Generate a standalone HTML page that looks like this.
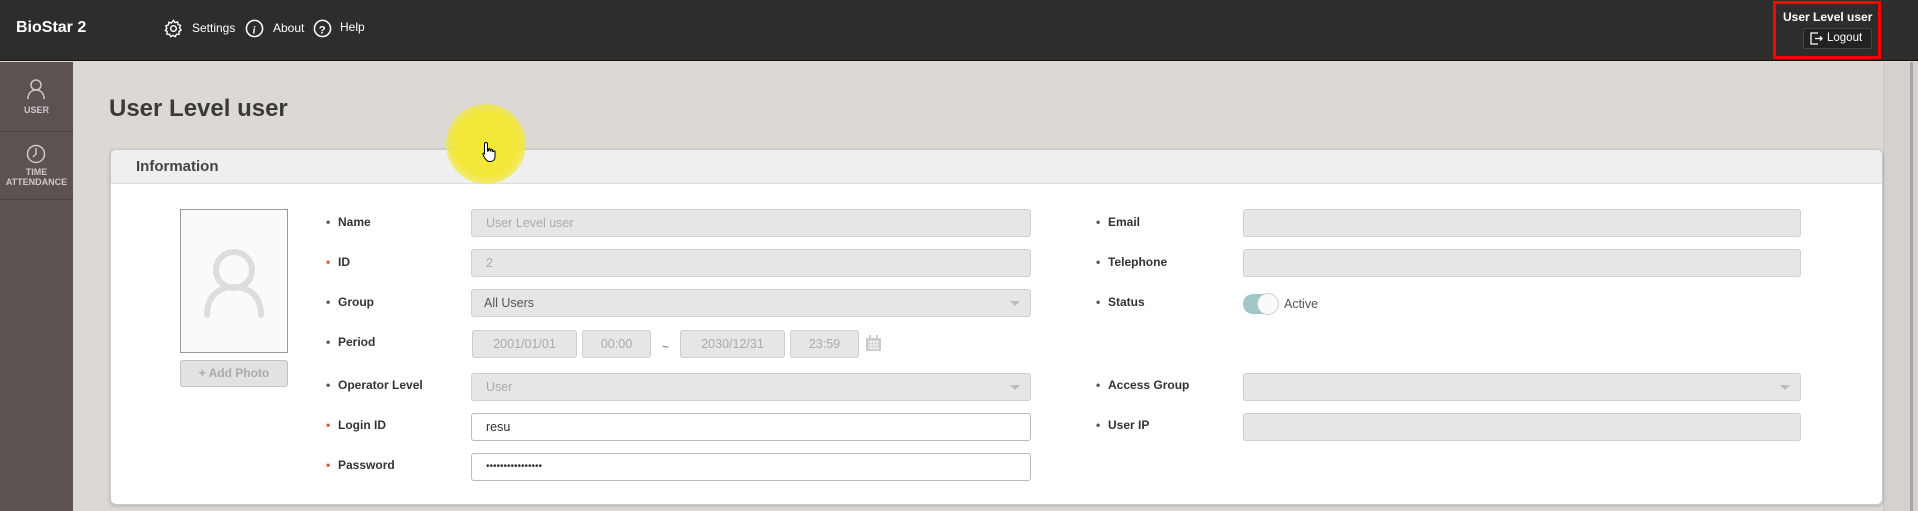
<!DOCTYPE html>
<html><head><meta charset="utf-8"><style>
*{box-sizing:border-box;margin:0;padding:0}
body{width:1918px;height:511px;overflow:hidden;background:#dcd9d4;font-family:"Liberation Sans",sans-serif;position:relative}
.abs{position:absolute}
#hdr{left:0;top:0;width:1918px;height:61px;background:#2f2c2c;border-bottom:1px solid #111}
.ht{color:#fff;font-size:12px;position:absolute}
#side{left:0;top:62px;width:73px;height:449px;background:#5c5252}
.sl{color:#cfc8c8;font-size:9px;font-weight:bold;text-align:center;width:73px;position:absolute;left:0;line-height:10px}
.lbl{position:absolute;font-size:12px;font-weight:bold;color:#333}
.lbl:before{content:"•";position:absolute;left:-12px;color:#555}
.lbl.r:before{color:#d2622f}
.inp{position:absolute;height:28px;background:#e6e6e6;border:1px solid #cfcfcf;border-radius:3px;font-size:12.5px;color:#aaa;padding-left:14px;line-height:26px}
.inp.w{background:#fff;border-color:#bbb;color:#333}
.arr:after{content:"";position:absolute;right:10px;top:11px;border:5px solid transparent;border-top:5px solid #bbb}
</style></head><body>
<div id="hdr" class="abs">
<div class="ht" style="left:16px;top:19px;font-size:16px;font-weight:bold">BioStar 2</div>
<svg class="abs" style="left:164px;top:19px" width="19" height="19" viewBox="0 0 20 20" fill="none" stroke="#fff" stroke-width="1.5"><circle cx="10" cy="10" r="3"/><path d="M10 1.5l1.6 2.3 2.7-.7.5 2.7 2.6 1-1 2.6 1.6 2.2-2.3 1.6.2 2.8-2.8.1-1.2 2.5-2.4-1.4-2.4 1.4-1.2-2.5-2.8-.1.2-2.8L1.4 12l1.6-2.2-1-2.6 2.6-1 .5-2.7 2.7.7z"/></svg>
<div class="ht" style="left:192px;top:21px">Settings</div>
<svg class="abs" style="left:245px;top:19px" width="19" height="19" viewBox="0 0 20 20" fill="none" stroke="#fff" stroke-width="1.6"><circle cx="10" cy="10" r="8.5"/><text x="8" y="15" fill="#fff" stroke="none" font-size="11" font-style="italic" font-weight="bold" font-family="Liberation Serif">i</text></svg>
<div class="ht" style="left:273px;top:21px">About</div>
<svg class="abs" style="left:313px;top:19px" width="19" height="19" viewBox="0 0 20 20" fill="none" stroke="#fff" stroke-width="1.6"><circle cx="10" cy="10" r="8.5"/><text x="6" y="15" fill="#fff" stroke="none" font-size="12" font-weight="bold">?</text></svg>
<div class="ht" style="left:340px;top:20px">Help</div>
<div class="abs" style="left:1773px;top:1px;width:108px;height:58px;border:3px solid #f00"></div>
<div class="ht" style="left:1783px;top:10px;font-weight:bold;font-size:12px">User Level user</div>
<div class="abs" style="left:1803px;top:28px;width:69px;height:21px;background:#222;border:1px solid #444;border-radius:2px"></div>
<svg class="abs" style="left:1810px;top:32px" width="13" height="13" viewBox="0 0 13 13" fill="none" stroke="#fff" stroke-width="1.3"><path d="M8 1H1v11h7M5 6.5h7M10 4.5l2 2-2 2"/></svg>
<div class="ht" style="left:1827px;top:32px;font-size:11.5px">Logout</div>
</div>
<div id="side" class="abs">
<svg class="abs" style="left:25px;top:16px" width="22" height="22" viewBox="0 0 22 22" fill="none" stroke="#cfc8c8" stroke-width="1.5"><circle cx="11" cy="7" r="5"/><path d="M3 21c0-6 3.5-9 8-9s8 3 8 9"/></svg>
<div class="sl" style="top:43px">USER</div>
<div class="abs" style="left:0;top:69px;width:73px;height:1px;background:#4a4242"></div>
<svg class="abs" style="left:26px;top:82px" width="20" height="20" viewBox="0 0 20 20" fill="none" stroke="#cfc8c8" stroke-width="1.5"><circle cx="10" cy="10" r="8.5"/><path d="M10 4v6l-3 3"/></svg>
<div class="sl" style="top:105px">TIME<br>ATTENDANCE</div>
<div class="abs" style="left:0;top:137px;width:73px;height:1px;background:#4a4242"></div>
</div>
<div class="abs" style="left:1883px;top:62px;width:35px;height:449px;background:#d5d2cd;border-left:1px solid #c9c5c0"></div>
<div class="abs" style="left:1910px;top:62px;width:3px;height:449px;background:#a8a5a0"></div>
<div class="abs" style="left:109px;top:95px;font-size:24px;font-weight:bold;color:#3a3a3a">User Level user</div>
<div class="abs" style="left:110px;top:149px;width:1773px;height:356px;background:#fff;border:1px solid #c8c8c8;border-radius:6px;box-shadow:0 1px 3px rgba(0,0,0,.2)"></div>
<div class="abs" style="left:111px;top:150px;width:1771px;height:34px;background:#efefef;border-bottom:1px solid #ddd;border-radius:6px 6px 0 0"></div>
<div class="abs" style="left:136px;top:158px;font-size:15px;font-weight:bold;color:#444">Information</div>
<div class="abs" style="left:180px;top:209px;width:108px;height:144px;border:1px solid #999;background:#fafafa"></div>
<svg class="abs" style="left:203px;top:248px" width="62" height="72" viewBox="0 0 62 72" fill="none" stroke="#ddd" stroke-width="6" stroke-linecap="round"><circle cx="31" cy="22" r="18"/><path d="M4 67c0-18 11-28 27-28s27 10 27 28"/></svg>
<div class="abs" style="left:180px;top:360px;width:108px;height:27px;background:#e2e2e2;border:1px solid #c2c2c2;border-radius:3px;font-size:12px;font-weight:bold;color:#aaa;text-align:center;line-height:25px">+ Add Photo</div>

<div class="lbl" style="left:338px;top:215px">Name</div>
<div class="lbl r" style="left:338px;top:255px">ID</div>
<div class="lbl" style="left:338px;top:295px">Group</div>
<div class="lbl" style="left:338px;top:335px">Period</div>
<div class="lbl" style="left:338px;top:378px">Operator Level</div>
<div class="lbl r" style="left:338px;top:418px">Login ID</div>
<div class="lbl r" style="left:338px;top:458px">Password</div>

<div class="inp" style="left:471px;top:209px;width:560px">User Level user</div>
<div class="inp" style="left:471px;top:249px;width:560px">2</div>
<div class="inp arr" style="left:471px;top:289px;width:560px;color:#555;padding-left:12px">All Users</div>
<div class="inp" style="left:472px;top:330px;width:105px;text-align:center;padding:0">2001/01/01</div>
<div class="inp" style="left:582px;top:330px;width:69px;text-align:center;padding:0">00:00</div>
<div class="abs" style="left:662px;top:340px;font-size:12px;color:#666">~</div>
<div class="inp" style="left:680px;top:330px;width:105px;text-align:center;padding:0">2030/12/31</div>
<div class="inp" style="left:790px;top:330px;width:69px;text-align:center;padding:0">23:59</div>
<svg class="abs" style="left:865px;top:335px" width="17" height="17" viewBox="0 0 17 17" fill="#ccc"><rect x="1" y="3" width="15" height="13"/><rect x="4" y="0" width="2" height="4"/><rect x="11" y="0" width="2" height="4"/><path d="M3 7h11M3 10h11M3 13h11M6 5v10M9 5v10M12 5v10" stroke="#fff" stroke-width=".8"/></svg>
<div class="inp arr" style="left:471px;top:373px;width:560px">User</div>
<div class="inp w" style="left:471px;top:413px;width:560px">resu</div>
<div class="inp w" style="left:471px;top:453px;width:560px;font-size:10px;letter-spacing:0">••••••••••••••••</div>

<div class="lbl" style="left:1108px;top:215px">Email</div>
<div class="lbl" style="left:1108px;top:255px">Telephone</div>
<div class="lbl" style="left:1108px;top:295px">Status</div>
<div class="lbl" style="left:1108px;top:378px">Access Group</div>
<div class="lbl" style="left:1108px;top:418px">User IP</div>
<div class="inp" style="left:1243px;top:209px;width:558px"></div>
<div class="inp" style="left:1243px;top:249px;width:558px"></div>
<div class="abs" style="left:1243px;top:294px;width:35px;height:20px;border-radius:10px;background:#9fc7c7"></div>
<div class="abs" style="left:1257px;top:293px;width:22px;height:22px;border-radius:50%;background:#fafafa;border:1px solid #ccc"></div>
<div class="abs" style="left:1284px;top:297px;font-size:12.5px;color:#555">Active</div>
<div class="inp arr" style="left:1243px;top:373px;width:558px"></div>
<div class="inp" style="left:1243px;top:413px;width:558px"></div>

<div class="abs" style="left:446px;top:104px;width:80px;height:80px;border-radius:50%;background:radial-gradient(circle,#f3e83a 55%,rgba(243,232,58,.6) 75%,rgba(243,232,58,0) 100%)"></div>
<svg class="abs" style="left:482px;top:141px" width="16" height="22" viewBox="0 0 16 22"><path d="M4 1.5c1 0 1.5.6 1.5 1.5v7l1-.2v-1.5c0-1 1.5-1 1.5 0v1.5l1 .1V9c0-1 1.5-1 1.5 0v1.3l1 .2c0-1 1.5-1 1.5 0V16c0 2.5-2 4.5-4.5 4.5H7.5C5.5 20.5 4 19 2.5 16.5L1 13.5c-.5-1 .8-1.8 1.5-1L2.5 12.5V3c0-.9.5-1.5 1.5-1.5z" fill="#fff" stroke="#000" stroke-width="1"/></svg>
</body></html>
